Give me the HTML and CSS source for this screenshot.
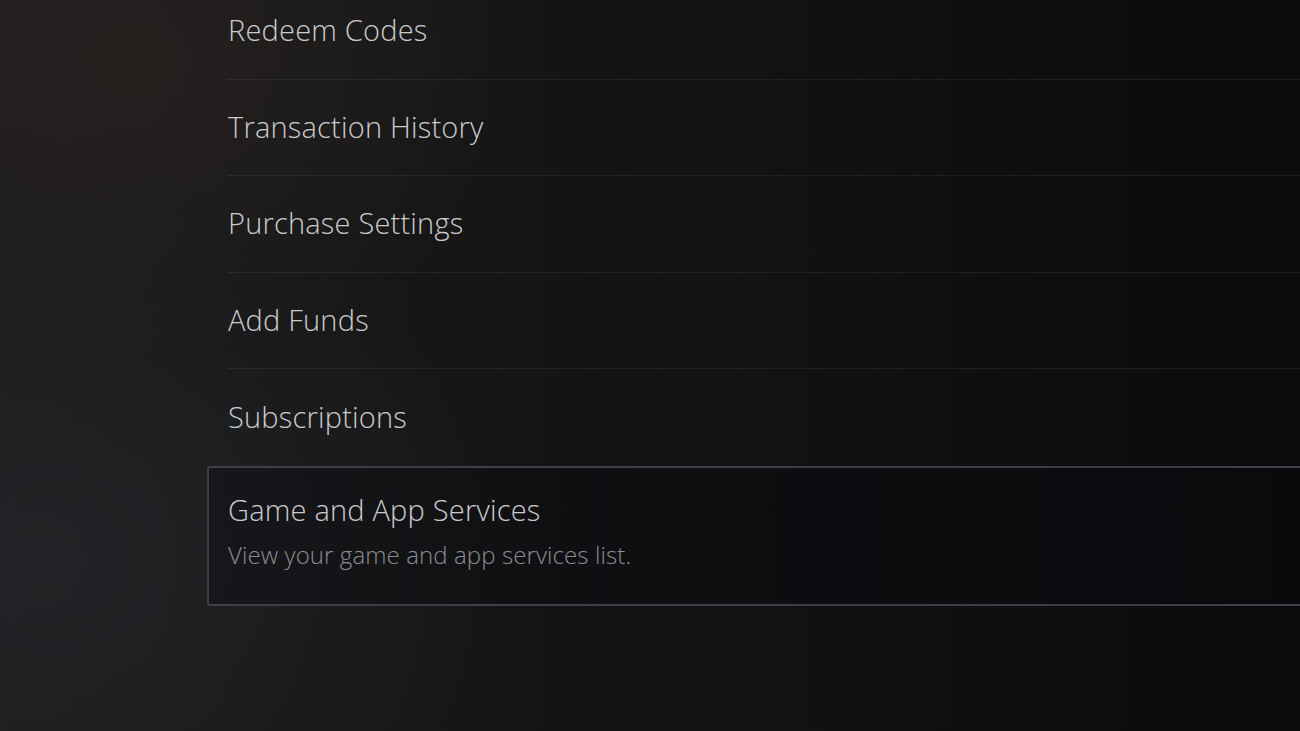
FILE: index.html
```html
<!DOCTYPE html>
<html lang="en">
<head>
<meta charset="utf-8">
<title>Account Payments</title>
<link rel="stylesheet" href="styles.css">
</head>
<body>
<div class="screen">
  <ul class="menu">
    <li class="row"><span class="label">Redeem Codes</span></li>
    <li class="row"><span class="label">Transaction History</span></li>
    <li class="row"><span class="label">Purchase Settings</span></li>
    <li class="row"><span class="label">Add Funds</span></li>
    <li class="row"><span class="label">Subscriptions</span></li>
    <li class="row focused">
      <span class="label">Game and App Services</span>
      <span class="desc">View your game and app services list.</span>
    </li>
  </ul>
</div>
</body>
</html>
```
FILE: styles.css
```css
* { box-sizing: border-box; }
html, body { margin: 0; padding: 0; }
body {
  width: 1300px;
  height: 731px;
  overflow: hidden;
  font-family: "Open Sans", "Noto Sans", sans-serif;
  background-color: #121213;
  background-image:
    radial-gradient(ellipse 420px 300px at 120px 60px, rgba(48,40,36,0.5), rgba(48,40,36,0) 100%),
    radial-gradient(ellipse 480px 380px at 30px 560px, rgba(40,44,48,0.55), rgba(40,44,48,0) 100%),
    linear-gradient(90deg, #1c1b1c 0%, #161617 35%, #101012 70%, #0c0c0e 100%);
}
.screen {
  padding-left: 207px;
}
.menu {
  list-style: none;
  margin: -17px 0 0 0;
  padding: 0;
}
.row {
  height: 96.5px;
  margin-left: 21px;
  border-bottom: 1px solid rgba(255,255,255,0.07);
  display: flex;
  flex-direction: column;
  justify-content: center;
}
.row:nth-child(5) { border-bottom: none; }
.label {
  color: #cbcbcd;
  font-size: 29px;
  font-weight: 300;
  letter-spacing: 0.2px;
  line-height: 1.2;
}
.focused {
  margin-left: 0;
  height: 140px;
  padding-left: 19px;
  border: 2px solid #3e3f45;
  border-right: none;
  border-radius: 3px 0 0 3px;
  background: rgba(8,8,12,0.3);
  justify-content: flex-start;
  padding-top: 25px;
}
.desc {
  color: #8c8d90;
  font-size: 24px;
  font-weight: 300;
  letter-spacing: 0.1px;
  line-height: 1.2;
  margin-top: 14px;
}
```
